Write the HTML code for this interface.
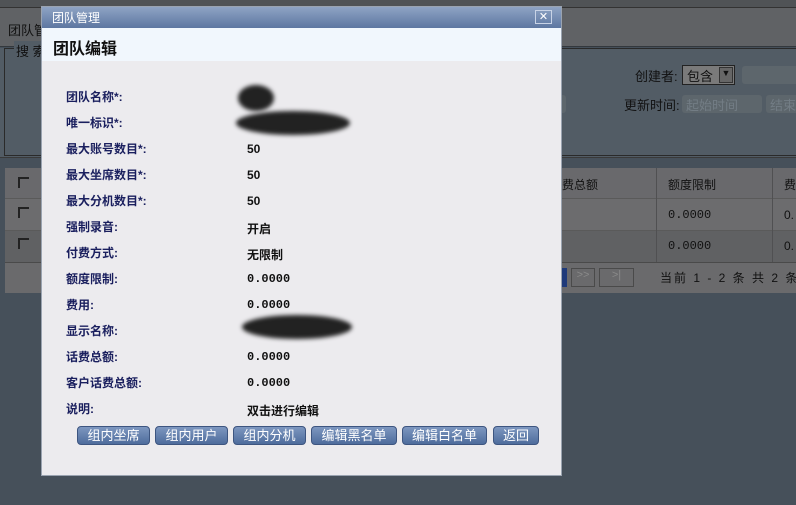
<!DOCTYPE html>
<html><head><meta charset="utf-8"><style>
*{margin:0;padding:0;box-sizing:border-box}
body{width:796px;height:505px;overflow:hidden;background:#46505a;font-family:"Liberation Sans","Noto Sans CJK SC",sans-serif;font-size:12px;position:relative}
.a{position:absolute;white-space:nowrap}
.lbl{position:absolute;left:24px;font-weight:bold;color:#1a1f5e;font-size:12px}
.val{position:absolute;left:205px;font-weight:bold;color:#111;font-size:12px}
.btn{position:absolute;top:426px;height:19px;background:linear-gradient(#7d97c0,#4e6c9c);border:1px solid #3d5580;border-radius:4px;color:#fff;font-size:13px;text-align:center;line-height:17px}
.blur{position:absolute;background:#222;border-radius:50%;filter:blur(2px)}
</style></head><body>
<div class="a" style="left:0;top:0;width:796px;height:8px;background:#505356;border-bottom:1px solid #333"></div>
<div class="a" style="left:0;top:8px;width:796px;height:39px;background:#606265;border-bottom:1px solid #33383d"></div>
<div class="a" style="left:8px;top:20px;color:#111;font-size:13px">团队管</div>
<div class="a" style="left:0;top:48px;width:796px;height:110px;background:#525c65;border-bottom:1px solid #3a3a3a"></div>
<div class="a" style="left:4px;top:48px;width:800px;height:108px;border:1px solid #2a2a2a;border-right:none"></div>
<div class="a" style="left:14px;top:41px;color:#111;font-size:13px;background:#525c65;padding:0 2px">搜 索</div>
<div class="a" style="left:635px;top:66px;color:#111;font-size:13px">创建者:</div>
<div class="a" style="left:682px;top:65px;width:53px;height:20px;background:#7a7a7a;border:1px solid #222;color:#111;font-size:13px;padding-left:4px">包含<span style="position:absolute;right:1px;top:1px;width:14px;height:16px;background:#666;border:1px solid #333;font-size:9px;text-align:center">▼</span></div>
<div class="a" style="left:742px;top:66px;width:60px;height:18px;background:#5d666c;border-radius:3px"></div>
<div class="a" style="left:624px;top:95px;color:#111;font-size:13px">更新时间:</div>
<div class="a" style="left:682px;top:95px;width:80px;height:18px;background:#5d666c;border-radius:3px;color:#737d85;font-size:13px;padding-left:4px">起始时间</div>
<div class="a" style="left:766px;top:95px;width:40px;height:18px;background:#5d666c;border-radius:3px;color:#737d85;font-size:13px;padding-left:4px">结束</div>
<div class="a" style="left:540px;top:95px;width:26px;height:18px;background:#5d666c;border-radius:3px"></div>
<div class="a" style="left:5px;top:168px;width:800px;height:125px;background:#69696c"></div>
<div class="a" style="left:5px;top:198px;width:800px;height:32px;background:#6c6c6e;border-top:1px solid #5a5a5a"></div>
<div class="a" style="left:5px;top:230px;width:800px;height:32px;background:#606163;border-top:1px solid #5a5a5a"></div>
<div class="a" style="left:5px;top:262px;width:800px;height:31px;background:#6a6a6c;border-top:1px solid #4a4a4a"></div>
<div class="a" style="left:656px;top:168px;width:1px;height:94px;background:#505052"></div>
<div class="a" style="left:772px;top:168px;width:1px;height:94px;background:#505052"></div>
<div class="a" style="left:18px;top:177px;width:11px;height:11px;border-top:2px solid #222;border-left:2px solid #222"></div>
<div class="a" style="left:18px;top:207px;width:11px;height:11px;border-top:2px solid #222;border-left:2px solid #222"></div>
<div class="a" style="left:18px;top:238px;width:11px;height:11px;border-top:2px solid #222;border-left:2px solid #222"></div>
<div class="a" style="left:562px;top:176px;color:#111;font-size:12px">费总额</div>
<div class="a" style="left:668px;top:176px;color:#111;font-size:12px">额度限制</div>
<div class="a" style="left:784px;top:176px;color:#111;font-size:12px">费</div>
<div class="a" style="left:668px;top:208px;color:#111;font-family:'Liberation Mono',monospace;font-size:12px">0.0000</div>
<div class="a" style="left:668px;top:239px;color:#111;font-family:'Liberation Mono',monospace;font-size:12px">0.0000</div>
<div class="a" style="left:784px;top:208px;color:#111;font-size:12px">0.</div>
<div class="a" style="left:784px;top:239px;color:#111;font-size:12px">0.</div>
<div class="a" style="left:562px;top:268px;width:5px;height:19px;background:#1f3a7a"></div>
<div class="a" style="left:571px;top:268px;width:24px;height:19px;border:1px solid #4a4a4a;color:#8a8a8a;text-align:center;font-size:11px">&gt;&gt;</div>
<div class="a" style="left:599px;top:268px;width:35px;height:19px;border:1px solid #4a4a4a;color:#8a8a8a;text-align:center;font-size:11px">&gt;|</div>
<div class="a" style="left:660px;top:269px;color:#111;font-size:12px;letter-spacing:2px">当前 1 - 2 条 共 2 条</div>

<div class="a" style="left:41px;top:6px;width:521px;height:470px;background:#ecebee;border:1px solid #9aa3b0">
 <div class="a" style="left:0;top:0;width:519px;height:21px;background:linear-gradient(#8ea3c4,#5d77a1)"></div>
 <div class="a" style="left:10px;top:2px;color:#fff;font-size:12px">团队管理</div>
 <div class="a" style="left:493px;top:3px;width:17px;height:14px;border:1px solid #c8d3e6;color:#fff;font-size:11px;line-height:12px;text-align:center">✕</div>
 <div class="a" style="left:0;top:21px;width:519px;height:33px;background:#f1f7fd"></div>
 <div class="a" style="left:11px;top:28px;font-size:16px;font-weight:bold;color:#111">团队编辑</div>
 <div class="lbl" style="top:81px">团队名称*:</div>
 <div class="lbl" style="top:107px">唯一标识*:</div>
 <div class="lbl" style="top:133px">最大账号数目*:</div>
 <div class="lbl" style="top:159px">最大坐席数目*:</div>
 <div class="lbl" style="top:185px">最大分机数目*:</div>
 <div class="lbl" style="top:211px">强制录音:</div>
 <div class="lbl" style="top:237px">付费方式:</div>
 <div class="lbl" style="top:263px">额度限制:</div>
 <div class="lbl" style="top:289px">费用:</div>
 <div class="lbl" style="top:315px">显示名称:</div>
 <div class="lbl" style="top:341px">话费总额:</div>
 <div class="lbl" style="top:367px">客户话费总额:</div>
 <div class="lbl" style="top:393px">说明:</div>
 <div class="blur" style="left:196px;top:78px;width:36px;height:26px"></div>
 <div class="blur" style="left:194px;top:104px;width:114px;height:24px"></div>
 <div class="val" style="top:135px">50</div>
 <div class="val" style="top:161px">50</div>
 <div class="val" style="top:187px">50</div>
 <div class="val" style="top:213px">开启</div>
 <div class="val" style="top:239px">无限制</div>
 <div class="val" style="top:265px;font-family:'Liberation Mono',monospace">0.0000</div>
 <div class="val" style="top:291px;font-family:'Liberation Mono',monospace">0.0000</div>
 <div class="blur" style="left:200px;top:308px;width:110px;height:24px"></div>
 <div class="val" style="top:343px;font-family:'Liberation Mono',monospace">0.0000</div>
 <div class="val" style="top:369px;font-family:'Liberation Mono',monospace">0.0000</div>
 <div class="val" style="top:395px">双击进行编辑</div>
</div>
<div class="btn" style="left:77px;width:73px">组内坐席</div>
<div class="btn" style="left:155px;width:73px">组内用户</div>
<div class="btn" style="left:233px;width:73px">组内分机</div>
<div class="btn" style="left:311px;width:86px">编辑黑名单</div>
<div class="btn" style="left:402px;width:85px">编辑白名单</div>
<div class="btn" style="left:493px;width:46px">返回</div>
</body></html>
